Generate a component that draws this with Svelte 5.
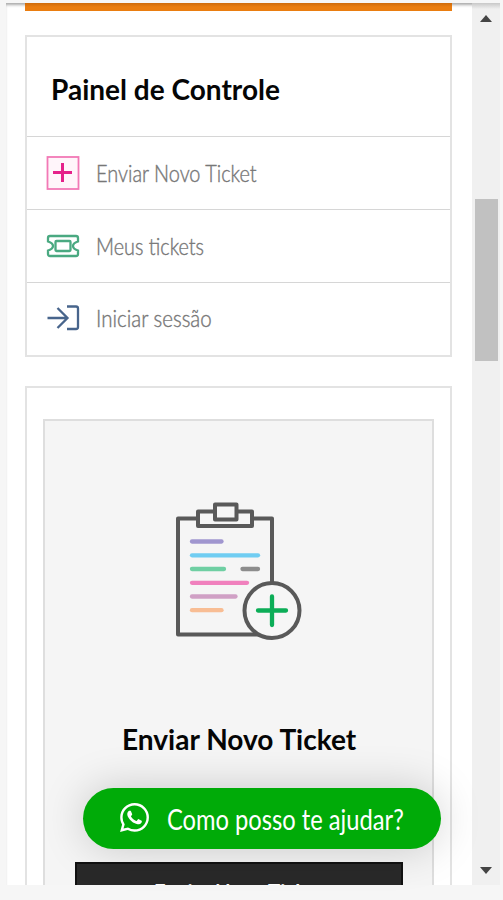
<script lang="ts">
    const menu = [
        { icon: 'plus', label: 'Enviar Novo Ticket', width: 161 },
        { icon: 'ticket', label: 'Meus tickets', width: 108 },
        { icon: 'login', label: 'Iniciar sessão', width: 116 }
    ];

    // Condense a label horizontally so that it takes up the given width
    function fit(node: HTMLElement, width: number) {
        node.style.transform = `scaleX(${width / node.offsetWidth})`;
    }
</script>

<div class="frame">
    <div class="viewport">
        <main class="page">
            <div class="banner"></div>

            <nav class="panel">
                <h2><span class="text" use:fit={229}>Painel de Controle</span></h2>
                {#each menu as item}
                    <a class="menu-item" href="#{item.icon}">
                        <svg class="menu-icon" width="34" height="34" viewBox="0 0 34 34" fill="none">
                            {#if item.icon === 'plus'}
                                <rect x="1.5" y="1" width="31" height="32" fill="#fff5fa" stroke="#f279b6" stroke-width="1.8" />
                                <path d="M7 16.5h19M16.5 7v19" stroke="#e5218a" stroke-width="3" />
                            {:else if item.icon === 'ticket'}
                                <path
                                    d="M4 7H30Q32 7 32 9V12.5Q27 14 27 17Q27 20 32 21.5V25Q32 27 30 27H4Q2 27 2 25V21.5Q7 20 7 17Q7 14 2 12.5V9Q2 7 4 7Z"
                                    stroke="#4aa981"
                                    stroke-width="2.3"
                                />
                                <rect x="9.5" y="12" width="15" height="10" rx="1" stroke="#4aa981" stroke-width="2.3" />
                            {:else}
                                <path
                                    d="M1.500 17H20.500M11.500 7L21.500 17L11.500 27M21 5.500H30Q32 5.500 32 7.500V26Q32 28 30 28H21"
                                    stroke="#48658c"
                                    stroke-width="2.3"
                                />
                            {/if}
                        </svg>
                        <span class="text" use:fit={item.width}>{item.label}</span>
                    </a>
                {/each}
            </nav>

            <section class="cards">
                <article class="card">
                    <svg class="clipboard" width="130" height="142" viewBox="0 0 130 142" fill="none">
                        <g stroke="#595959" stroke-width="4" stroke-linejoin="round">
                            <path d="M23 16.500H3V132.500H97V16.500H78" />
                            <path d="M40 9.500H23V24H77V9.500H62" />
                            <rect x="40" y="2.500" width="21.500" height="15" />
                        </g>
                        <g stroke-width="4.300" stroke-linecap="round">
                            <path d="M17 39.500H46.500" stroke="#a096cf" />
                            <path d="M17 53.300H83" stroke="#70cdf2" />
                            <path d="M17 67H49" stroke="#6fcfa3" />
                            <path d="M67.500 67H83" stroke="#8c8c8c" />
                            <path d="M17 80.800H72" stroke="#f080bd" />
                            <path d="M17 94.500H60.500" stroke="#d0a0c5" />
                            <path d="M17 108.200H46.500" stroke="#f8bd94" />
                        </g>
                        <circle cx="97" cy="108.500" r="27.500" fill="#f6f6f6" stroke="#595959" stroke-width="4" />
                        <path d="M83 108.500H111M97 94.500V123" stroke="#0cad57" stroke-width="4.300" stroke-linecap="round" />
                    </svg>
                    <h3><span class="text" use:fit={234}>Enviar Novo Ticket</span></h3>
                    <a class="button" href="#novo"><span class="text" use:fit={170}>Enviar Novo Ticket</span></a>
                </article>
            </section>
        </main>

        <div class="scrollbar">
            <svg class="arrow" width="12" height="7" viewBox="0 0 12 7"><path d="M0 7L6 0L12 7Z" fill="#444" /></svg>
            <div class="thumb"></div>
            <svg class="arrow" width="12" height="7" viewBox="0 0 12 7"><path d="M0 0H12L6 7Z" fill="#444" /></svg>
        </div>
    </div>

    <a class="whatsapp" href="#whatsapp">
        <svg width="29" height="29" viewBox="0 0 24 24" fill="#fff">
            <path
                d="M17.472 14.382c-.297-.149-1.758-.867-2.030-.967-.273-.099-.471-.148-.670.150-.197.297-.767.966-.940 1.164-.173.199-.347.223-.644.075-.297-.150-1.255-.463-2.390-1.475-.883-.788-1.480-1.761-1.653-2.059-.173-.297-.018-.458.130-.606.134-.133.298-.347.446-.520.149-.174.198-.298.298-.497.099-.198.050-.371-.025-.520-.075-.149-.669-1.612-.916-2.207-.242-.579-.487-.500-.669-.510-.173-.008-.371-.010-.570-.010-.198 0-.520.074-.792.372-.272.297-1.040 1.016-1.040 2.479 0 1.462 1.065 2.875 1.213 3.074.149.198 2.096 3.200 5.077 4.487.709.306 1.262.489 1.694.625.712.227 1.360.195 1.871.118.571-.085 1.758-.719 2.006-1.413.248-.694.248-1.289.173-1.413-.074-.124-.272-.198-.570-.347m-5.421 7.403h-.004a9.870 9.870 0 0 1-5.031-1.378l-.361-.214-3.741.982.998-3.648-.235-.374a9.860 9.860 0 0 1-1.510-5.260c.001-5.450 4.436-9.884 9.888-9.884a9.830 9.830 0 0 1 6.988 2.898 9.830 9.830 0 0 1 2.893 6.994c-.003 5.450-4.437 9.884-9.885 9.884m8.413-18.297A11.815 11.815 0 0 0 12.050 0C5.495 0 .160 5.335.157 11.892c0 2.096.547 4.142 1.588 5.945L.057 24l6.305-1.654a11.880 11.880 0 0 0 5.683 1.448h.005c6.554 0 11.890-5.335 11.893-11.893a11.820 11.820 0 0 0-3.480-8.413"
            />
        </svg>
        <span class="text" use:fit={237}>Como posso te ajudar?</span>
    </a>
</div>

<style>
    :global(body) {
        background: #f6f6f6;
    }

    .frame {
        position: relative;
        box-sizing: border-box;
        height: 900px;
        padding: 3px 3px 15px 6px;
        overflow: hidden;
        font-family: Lato, 'Open Sans', sans-serif;
    }

    .viewport {
        display: flex;
        height: 882px;
        overflow: hidden;
        background: #fff;
        box-shadow: inset 0 3px 3px -1px #aaa;
    }

    .page {
        box-sizing: border-box;
        width: 466px;
        padding: 0 20px 0 19px;
    }

    .banner {
        height: 8px;
        background: linear-gradient(#ce6b0b, #ea7d10 50%);
    }

    .panel,
    .cards {
        box-sizing: border-box;
        border: 2px solid #e3e3e3;
    }

    .panel {
        height: 322px;
        margin-top: 24px;
    }

    .text {
        display: inline-block;
        flex-shrink: 0;
        white-space: nowrap;
        transform-origin: left center;
    }

    h2,
    h3 {
        margin: 0;
        color: #050505;
        font-size: 29px;
        font-weight: 700;
        line-height: 36px;
    }

    h2 {
        display: flex;
        align-items: center;
        box-sizing: border-box;
        height: 99px;
        padding: 4px 0 0 24px;
    }

    .menu-item {
        display: flex;
        align-items: center;
        box-sizing: border-box;
        height: 73px;
        padding-left: 19px;
        border-top: 1.5px solid #d6d6d6;
        color: #777;
        font-size: 23.5px;
        font-weight: 300;
        -webkit-text-stroke: 0.4px #777;
        text-decoration: none;
    }

    .menu-item + .menu-item {
        height: 72.5px;
    }

    .menu-icon {
        margin-right: 16px;
    }

    .cards {
        height: 540px;
        margin-top: 29px;
        padding: 31px 16px 0;
    }

    .card {
        box-sizing: border-box;
        height: 515px;
        padding: 81px 29px 0 30px;
        border: 2px solid #dedede;
        background: #f5f5f5;
    }

    .clipboard {
        display: block;
        margin-left: 100px;
    }

    h3 {
        margin: 77px 0 0 47px;
    }

    .button {
        display: block;
        box-sizing: border-box;
        height: 70px;
        margin-top: 105px;
        padding: 16px 0 0 77px;
        border: 2px solid #111;
        background: #292929;
        color: #fff;
        font-size: 22px;
        font-weight: 700;
        line-height: 26px;
        text-decoration: none;
    }

    .scrollbar {
        display: flex;
        flex-direction: column;
        align-items: center;
        box-sizing: border-box;
        width: 28px;
        padding: 12px 0 11px;
        background: linear-gradient(#c8c8c8, #f0f0f0 6px);
    }

    .thumb {
        width: 23px;
        height: 162px;
        margin: 177px 0 auto;
        background: #c1c1c1;
    }

    .whatsapp {
        position: absolute;
        right: 62px;
        bottom: 51px;
        display: flex;
        align-items: center;
        box-sizing: border-box;
        width: 358px;
        height: 61px;
        padding-left: 37px;
        border-radius: 31px;
        background: #00ab08;
        box-shadow: 0 0 44px rgba(0, 0, 0, 0.18);
        color: #fff;
        font-size: 28.5px;
        text-decoration: none;
    }

    .whatsapp svg {
        flex-shrink: 0;
        margin: 0 18px 3px 0;
    }
</style>
